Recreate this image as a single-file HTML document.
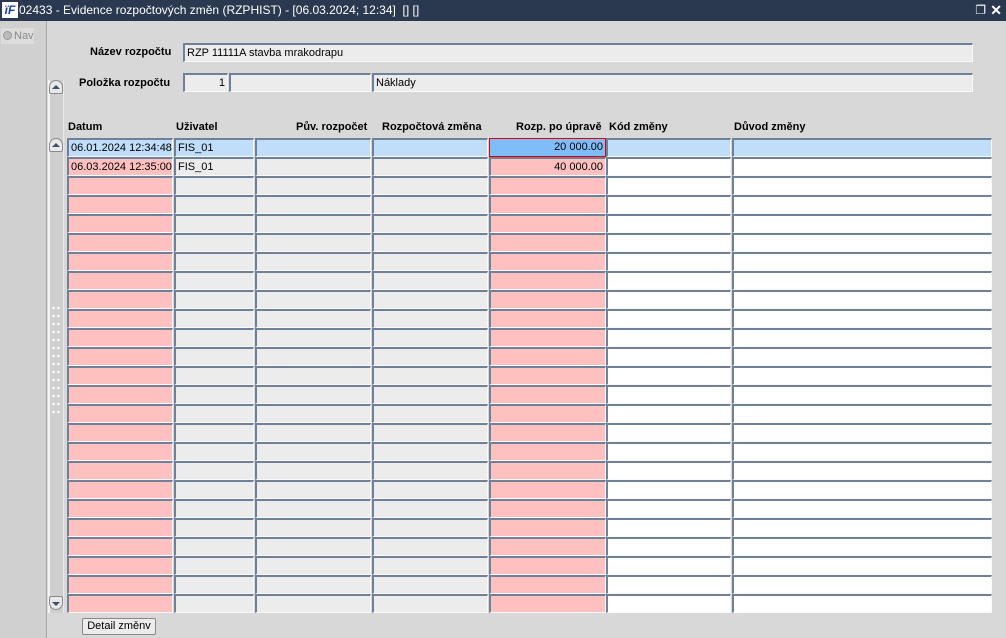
<!DOCTYPE html>
<html><head><meta charset="utf-8"><style>
*{margin:0;padding:0;box-sizing:border-box}
body{width:1006px;height:638px;overflow:hidden;background:#d8d8d8;font-family:"Liberation Sans",Arial,sans-serif;font-size:11px;position:relative;color:#000}
.a{position:absolute}
#title{left:0;top:0;width:1006px;height:21px;background:#2a3950;color:#fff;font-size:12px;line-height:21px}
#left{left:0;top:21px;width:47px;height:617px;background:#d0d0d0;border-right:1px solid #a8a8a8}
.f{position:absolute;height:19px;border-top:2px solid #6f8099;border-left:2px solid #6f8099;border-right:1px solid #fafafa;border-bottom:1px solid #fafafa;background:#ececec;line-height:17px;padding:0 2px;white-space:nowrap;overflow:hidden}
.lbl{position:absolute;font-weight:bold;font-size:11px}
.r{text-align:right}
.pk{background:#ffc0c0}.bl{background:#c0defa}.wh{background:#fff}.sel{background:#80bcf8;border:1px solid #e00000;}
.sb{position:absolute;left:48px;width:16px;background:#cfcfcf;border-left:2px solid #f4f4f4;border-right:1px solid #e8e8e8}
.btn{position:absolute;width:14px;height:14px;border:1px solid #8a8a8a;border-radius:7px 7px 2px 2px;background:#e8e8e8}
</style></head><body>
<div id="title" class="a"><span style="display:inline-block;width:16px;height:16px;background:#fff;color:#1a3fb0;font-weight:bold;font-style:italic;font-size:12px;line-height:16px;text-align:center;margin:2px 1px 0 2px;vertical-align:top">ïF</span>02433 - Evidence rozpočtových změn (RZPHIST) - [06.03.2024; 12:34]&nbsp; [] []
<span style="position:absolute;right:20px;top:0;font-size:12px">&#x2750;</span><span style="position:absolute;right:4px;top:0;font-size:14px;font-weight:bold">✕</span></div>
<div id="left" class="a"><div class="a" style="left:1px;top:7px;width:33px;height:16px;background:#dcdcdc;color:#8a8a8a;font-size:11px;line-height:16px"><span style="display:inline-block;width:9px;height:9px;border-radius:5px;background:#bbb;border:1px solid #999;vertical-align:-1px;margin:0 2px 0 2px"></span>Nav</div></div>

<div class="lbl" style="left:90px;top:46px">Název rozpočtu</div>
<div class="f" style="left:183px;top:43px;width:790px">RZP 11111A stavba mrakodrapu</div>
<div class="lbl" style="left:79px;top:77px">Položka rozpočtu</div>
<div class="f r" style="left:183px;top:73px;width:45px">1</div>
<div class="f" style="left:229px;top:73px;width:142px"></div>
<div class="f" style="left:372px;top:73px;width:601px">Náklady</div>

<div class="sb" style="top:80px;height:533px"></div>
<div class="btn" style="left:49px;top:80px"></div><div class="a" style="left:52px;top:85px;width:0;height:0;border-left:4px solid transparent;border-right:4px solid transparent;border-bottom:4px solid #3c4e6a"></div>
<div class="btn" style="left:49px;top:138px"></div><div class="a" style="left:52px;top:143px;width:0;height:0;border-left:4px solid transparent;border-right:4px solid transparent;border-bottom:4px solid #3c4e6a"></div>
<div class="btn" style="left:49px;top:596px;border-radius:2px 2px 7px 7px"></div><div class="a" style="left:52px;top:602px;width:0;height:0;border-left:4px solid transparent;border-right:4px solid transparent;border-top:4px solid #3c4e6a"></div>
<div class="a" style="left:51px;top:304px;width:10px;height:112px;background-image:radial-gradient(circle,#fff 1px,transparent 1.5px);background-size:5px 8px"></div>

<div class="lbl" style="left:68px;top:121px">Datum</div>
<div class="lbl" style="left:176px;top:121px">Uživatel</div>
<div class="lbl" style="left:296px;top:121px">Pův. rozpočet</div>
<div class="lbl" style="left:382px;top:121px">Rozpočtová změna</div>
<div class="lbl" style="left:516px;top:121px">Rozp. po úpravě</div>
<div class="lbl" style="left:609px;top:121px">Kód změny</div>
<div class="lbl" style="left:734px;top:121px">Důvod změny</div>

<div class="f bl" style="left:67px;top:138px;width:106px">06.01.2024 12:34:48</div>
<div class="f bl" style="left:174px;top:138px;width:80px">FIS_01</div>
<div class="f bl" style="left:255px;top:138px;width:116px"></div>
<div class="f bl" style="left:372px;top:138px;width:116px"></div>
<div class="f r sel" style="left:489px;top:138px;width:117px">20 000.00</div>
<div class="f bl" style="left:606px;top:138px;width:125px"></div>
<div class="f bl" style="left:732px;top:138px;width:260px"></div>

<div class="f pk" style="left:67px;top:157px;width:106px">06.03.2024 12:35:00</div>
<div class="f" style="left:174px;top:157px;width:80px">FIS_01</div>
<div class="f" style="left:255px;top:157px;width:116px"></div>
<div class="f" style="left:372px;top:157px;width:116px"></div>
<div class="f r pk" style="left:489px;top:157px;width:117px">40 000.00</div>
<div class="f wh" style="left:606px;top:157px;width:125px"></div>
<div class="f wh" style="left:732px;top:157px;width:260px"></div>
<div id="rows"></div>
<div class="a" style="left:82px;top:618px;width:74px;height:17px;border:1px solid #888;border-radius:2px;background:#ececec;text-align:center;line-height:15px;font-size:11px">Detail změnv</div>
<script>
var c=[[67,106,'pk'],[174,80,''],[255,116,''],[372,116,''],[489,117,'pk'],[606,125,'wh'],[732,260,'wh']],h='';
for(var i=2;i<25;i++){var t=138+i*19;for(var j=0;j<c.length;j++)h+='<div class="f '+c[j][2]+'" style="left:'+c[j][0]+'px;top:'+t+'px;width:'+c[j][1]+'px"></div>';}
document.getElementById('rows').innerHTML=h;
</script>
</body></html>
